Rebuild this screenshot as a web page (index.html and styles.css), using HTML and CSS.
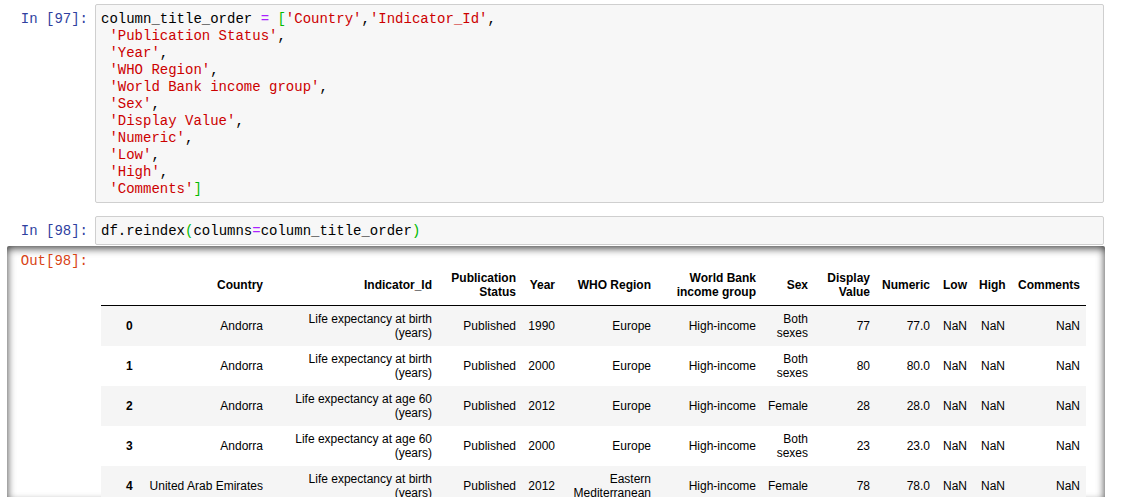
FILE: index.html
```html
<!DOCTYPE html>
<html>
<head>
<meta charset="utf-8">
<link rel="stylesheet" href="styles.css">
</head>
<body>
<div class="notebook">
  <div class="cell cell-first">
    <div class="prompt in-prompt">In&nbsp;[97]:</div>
    <div class="input-area">
      <div class="code">
        <div class="ln">column_title_order <span class="op">=</span> <span class="br">[</span><span class="s">'Country'</span>,<span class="s">'Indicator_Id'</span>,</div>
        <div class="ln"> <span class="s">'Publication Status'</span>,</div>
        <div class="ln"> <span class="s">'Year'</span>,</div>
        <div class="ln"> <span class="s">'WHO Region'</span>,</div>
        <div class="ln"> <span class="s">'World Bank income group'</span>,</div>
        <div class="ln"> <span class="s">'Sex'</span>,</div>
        <div class="ln"> <span class="s">'Display Value'</span>,</div>
        <div class="ln"> <span class="s">'Numeric'</span>,</div>
        <div class="ln"> <span class="s">'Low'</span>,</div>
        <div class="ln"> <span class="s">'High'</span>,</div>
        <div class="ln"> <span class="s">'Comments'</span><span class="br">]</span></div>
      </div>
    </div>
  </div>
  <div class="cell cell-second">
    <div class="prompt in-prompt">In&nbsp;[98]:</div>
    <div class="input-area">
      <div class="code">
        <div class="ln">df.reindex<span class="br">(</span>columns<span class="op">=</span>column_title_order<span class="br">)</span></div>
      </div>
    </div>
  </div>
  <div class="output-scroll">
    <div class="prompt out-prompt">Out[98]:</div>
    <div class="output-subarea">
      <table class="dataframe">
        <colgroup>
          <col class="c-idx"><col class="c-country"><col class="c-ind"><col class="c-pub"><col class="c-year"><col class="c-who"><col class="c-wb"><col class="c-sex"><col class="c-disp"><col class="c-num"><col class="c-low"><col class="c-high"><col class="c-com">
        </colgroup>
        <thead>
          <tr>
            <th></th><th>Country</th><th>Indicator_Id</th><th>Publication Status</th><th>Year</th><th>WHO Region</th><th>World Bank income group</th><th>Sex</th><th>Display Value</th><th>Numeric</th><th>Low</th><th>High</th><th>Comments</th>
          </tr>
        </thead>
        <tbody>
          <tr>
            <th class="idx">0</th><td>Andorra</td><td>Life expectancy at birth (years)</td><td>Published</td><td>1990</td><td>Europe</td><td>High-income</td><td>Both sexes</td><td>77</td><td>77.0</td><td>NaN</td><td>NaN</td><td>NaN</td>
          </tr>
          <tr>
            <th class="idx">1</th><td>Andorra</td><td>Life expectancy at birth (years)</td><td>Published</td><td>2000</td><td>Europe</td><td>High-income</td><td>Both sexes</td><td>80</td><td>80.0</td><td>NaN</td><td>NaN</td><td>NaN</td>
          </tr>
          <tr>
            <th class="idx">2</th><td>Andorra</td><td>Life expectancy at age 60 (years)</td><td>Published</td><td>2012</td><td>Europe</td><td>High-income</td><td>Female</td><td>28</td><td>28.0</td><td>NaN</td><td>NaN</td><td>NaN</td>
          </tr>
          <tr>
            <th class="idx">3</th><td>Andorra</td><td>Life expectancy at age 60 (years)</td><td>Published</td><td>2000</td><td>Europe</td><td>High-income</td><td>Both sexes</td><td>23</td><td>23.0</td><td>NaN</td><td>NaN</td><td>NaN</td>
          </tr>
          <tr>
            <th class="idx">4</th><td>United Arab Emirates</td><td>Life expectancy at birth (years)</td><td>Published</td><td>2012</td><td>Eastern Mediterranean</td><td>High-income</td><td>Female</td><td>78</td><td>78.0</td><td>NaN</td><td>NaN</td><td>NaN</td>
          </tr>
        </tbody>
      </table>
    </div>
  </div>
</div>
</body>
</html>
```

FILE: styles.css
```css
html, body {
  margin: 0;
  padding: 0;
  background: #fff;
  overflow: hidden;
}

.notebook {
  width: 1098px;
  margin-left: 7px;
}

.cell {
  display: flex;
  align-items: flex-start;
}

.cell-first {
  margin-top: 4px;
}

.cell-second {
  margin-top: 13px;
}

.prompt {
  width: 81px;
  flex: none;
  padding-right: 7px;
  text-align: right;
  font-family: "Liberation Mono", monospace;
  font-size: 14px;
  line-height: 17px;
}

.in-prompt {
  color: #303F9F;
  padding-top: 7px;
}

.out-prompt {
  color: #D84315;
  padding-top: 7px;
}

.input-area {
  width: 1007px;
  border: 1px solid #cfcfcf;
  border-radius: 2px;
  background: #f7f7f7;
}

.code {
  padding: 6px 5px 4px;
  font-family: "Liberation Mono", monospace;
  font-size: 14px;
  color: #000;
}

.ln {
  height: 17px;
  line-height: 17px;
  white-space: pre;
}

.code .s { color: #c00; }
.code .op { color: #a2f; }
.code .br { color: #0b0; }

.output-scroll {
  margin-top: 1px;
  width: 1098px;
  height: 254px;
  overflow: hidden;
  display: flex;
  align-items: flex-start;
  border-radius: 2px;
  box-shadow: inset 0 2px 8px rgba(0, 0, 0, 0.8);
}

.output-subarea {
  padding: 6px 0 0 6px;
  flex: 1;
}

.dataframe {
  margin-top: 13px;
  border-collapse: collapse;
  border-spacing: 0;
  table-layout: fixed;
  width: 985px;
  font-family: "Liberation Sans", Arial, sans-serif;
  font-size: 12px;
  line-height: 14px;
  color: #000;
}

.c-idx { width: 42px; }
.c-country { width: 126px; }
.c-ind { width: 169px; }
.c-pub { width: 84px; }
.c-year { width: 39px; }
.c-who { width: 96px; }
.c-wb { width: 105px; }
.c-sex { width: 52px; }
.c-disp { width: 62px; }
.c-num { width: 60px; }
.c-low { width: 37px; }
.c-high { width: 38px; }
.c-com { width: 75px; }

.dataframe th,
.dataframe td {
  padding: 6px 6px;
  text-align: right;
  vertical-align: middle;
  border: none;
}

.dataframe th {
  font-weight: bold;
}

.dataframe thead {
  border-bottom: 1px solid #000;
}

.dataframe tbody tr:nth-child(odd) {
  background: #f5f5f5;
}

.dataframe th.idx {
  text-align: left;
  padding-left: 25px;
}
```
